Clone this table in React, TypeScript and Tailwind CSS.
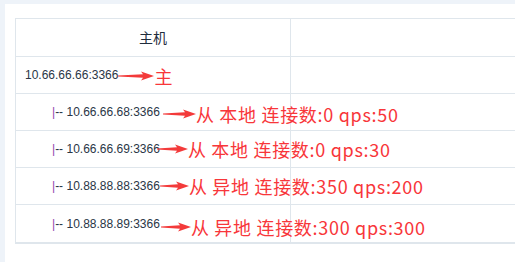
const rows = [
  { host: "10.66.66.66:3366", child: false, note: "主", gap: 0, arrow: 36, dy: 1 },
  { host: "10.66.66.68:3366", child: true, note: "从 本地 连接数:0 qps:50", gap: 3, arrow: 33, dy: 2 },
  { host: "10.66.66.69:3366", child: true, note: "从 本地 连接数:0 qps:30", gap: -3, arrow: 31, dy: 0 },
  { host: "10.88.88.88:3366", child: true, note: "从 异地 连接数:350 qps:200", gap: 0, arrow: 29, dy: 0 },
  { host: "10.88.88.89:3366", child: true, note: "从 异地 连接数:300 qps:300", gap: 1, arrow: 30, dy: 3 },
];

const Arrow = ({ width }: { width: number }) => (
  <svg width={width} height="10" viewBox={`0 0 ${width} 10`} className="shrink-0">
    <polygon
      points={`0,4.6 ${width - 11},3.3 ${width - 13},0.5 ${width},5 ${width - 13},9.5 ${width - 11},6.7 0,5.4`}
      fill="#f33a3a"
    />
  </svg>
);

const App = () => {
  return (
    <div className="w-[515px] h-[262px] overflow-hidden bg-[#eef3f9] pl-[5px] pt-[4px]">
      <div className="h-full bg-white pl-[10px] pt-[14px]">
        <div className="w-[700px] border-l border-t border-b-2 border-[#dfe6ec] font-['Liberation_Sans',sans-serif] text-[12px] text-[#2a3646]">
          <div className="flex h-[38px] border-b border-[#dfe6ec]">
            <div className="w-[275px] border-r border-[#dfe6ec] flex items-center justify-center text-[14px] text-[#1f2d3d] font-['Noto_Sans_CJK_SC',sans-serif]">
              主机
            </div>
            <div className="flex-1" />
          </div>
          {rows.map((r, i) => (
            <div
              key={r.host}
              className={`flex h-[37px] ${i < rows.length - 1 ? "border-b" : ""} border-[#dfe6ec]`}
            >
              <div
                className={`w-[275px] shrink-0 border-r border-[#dfe6ec] flex items-center whitespace-nowrap ${
                  r.child ? "pl-[36px]" : "pl-[9px]"
                }`}
              >
                <span>
                  {r.child && (
                    <>
                      <span className="text-[#8e44ad]">|</span>--{" "}
                    </>
                  )}
                  {r.host}
                </span>
                <span
                  className="flex items-center relative"
                  style={{ marginLeft: r.gap, top: r.dy }}
                >
                  <Arrow width={r.arrow} />
                  <span className="text-[18px] leading-none tracking-[0.7px] text-[#f8363a] font-['Noto_Sans_CJK_SC',sans-serif]">
                    {r.note}
                  </span>
                </span>
              </div>
              <div className="flex-1" />
            </div>
          ))}
        </div>
      </div>
    </div>
  );
};

export default App;
